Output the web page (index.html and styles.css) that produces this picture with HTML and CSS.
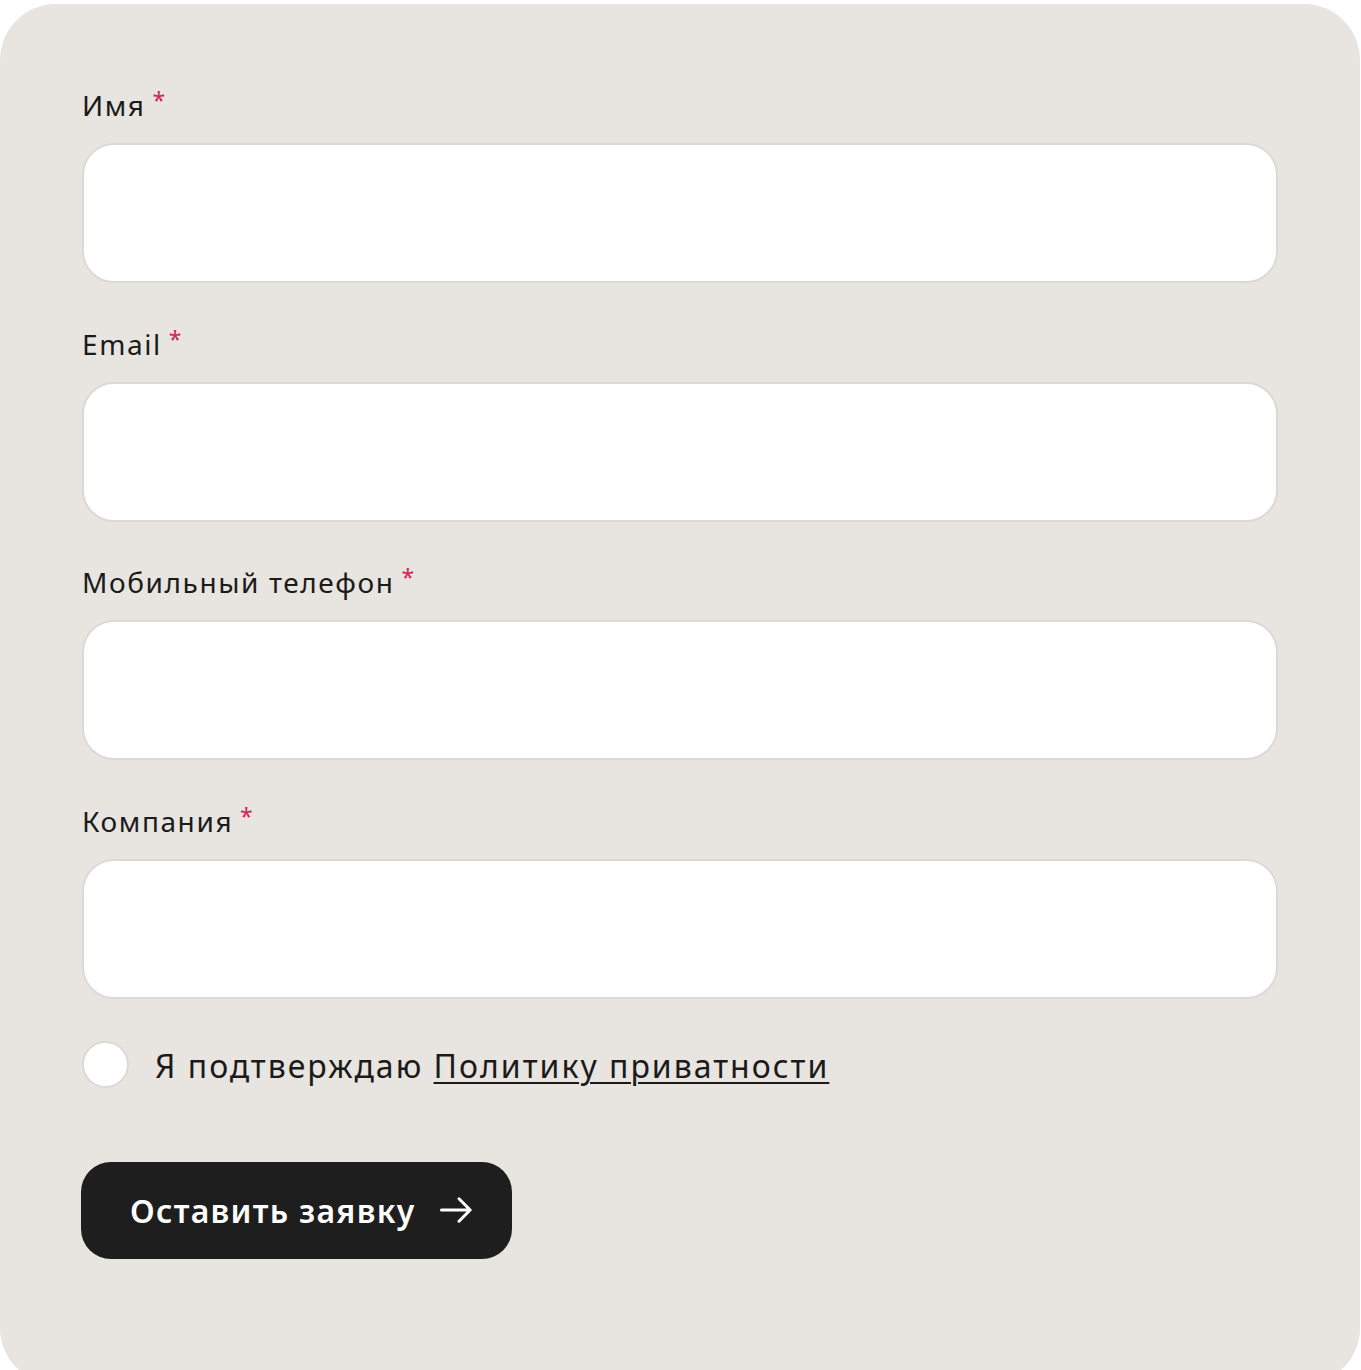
FILE: index.html
```html
<!DOCTYPE html>
<html lang="ru">
<head>
<meta charset="utf-8">
<link rel="stylesheet" href="styles.css">
</head>
<body>
<form class="card">
  <div class="field">
    <label class="label">Имя <span class="req">*</span></label>
    <input class="input" type="text">
  </div>
  <div class="field">
    <label class="label">Email <span class="req">*</span></label>
    <input class="input" type="text">
  </div>
  <div class="field">
    <label class="label">Мобильный телефон <span class="req">*</span></label>
    <input class="input" type="text">
  </div>
  <div class="field">
    <label class="label">Компания <span class="req">*</span></label>
    <input class="input" type="text">
  </div>
  <div class="agree">
    <span class="check"></span>
    <span class="agree-text">Я подтверждаю <a class="link" href="#">Политику приватности</a></span>
  </div>
  <button class="btn" type="button">
    <span class="btn-text">Оставить заявку</span>
    <svg class="arrow" width="32" height="26" viewBox="0 0 32 26" fill="none" stroke="#fff" stroke-width="3" stroke-linecap="round" stroke-linejoin="round"><path d="M1.5 13h28.5M19 1.8l11.2 11.2-11.2 11.2"/></svg>
  </button>
</form>
</body>
</html>
```
FILE: styles.css
```css
html, body {
  margin: 0;
  padding: 0;
  background: #ffffff;
}
body {
  font-family: "Noto Sans", "Open Sans", sans-serif;
  color: #1b1b1b;
}
.card {
  margin-top: 4px;
  width: 1360px;
  height: 1380px;
  box-sizing: border-box;
  background: #e8e4df;
  border-radius: 56px;
  padding: 80px 82px 0 82px;
  display: flex;
  flex-direction: column;
}
.field {
  display: flex;
  flex-direction: column;
  gap: 27px;
  margin-bottom: 39.67px;
}
.label {
  font-size: 28px;
  line-height: 32px;
  height: 32px;
  letter-spacing: 1.6px;
  white-space: nowrap;
}
.req {
  color: #d0245e;
  font-size: 23px;
  vertical-align: 7px;
  letter-spacing: 0;
  margin-left: -2px;
}
.input {
  width: 1196px;
  height: 140px;
  box-sizing: border-box;
  background: #ffffff;
  border: 2px solid #dcdad7;
  border-radius: 32px;
  margin: 0;
  outline: none;
}
.agree {
  display: flex;
  align-items: center;
  gap: 26px;
  height: 47px;
  margin-top: 2.33px;
}
.check {
  width: 47px;
  height: 47px;
  box-sizing: border-box;
  border-radius: 50%;
  background: #ffffff;
  border: 2px solid #dcdad7;
  flex: none;
}
.agree-text {
  font-size: 32px;
  letter-spacing: 2px;
  line-height: 40px;
  padding-top: 4px;
  white-space: nowrap;
}
.link {
  color: inherit;
  text-decoration: underline;
  text-decoration-thickness: 2px;
  text-underline-offset: 4px;
}
.btn {
  margin-top: 74px;
  align-self: flex-start;
  width: 431px;
  height: 97px;
  margin-left: -1px;
  border: none;
  border-radius: 30px;
  background: #1e1e1e;
  color: #ffffff;
  font-family: inherit;
  font-size: 32px;
  font-weight: 600;
  letter-spacing: 1.3px;
  display: flex;
  align-items: center;
  padding: 0 0 0 49px;
  gap: 25px;
}
.btn-text {
  white-space: nowrap;
}
.arrow {
  flex: none;
}
```
